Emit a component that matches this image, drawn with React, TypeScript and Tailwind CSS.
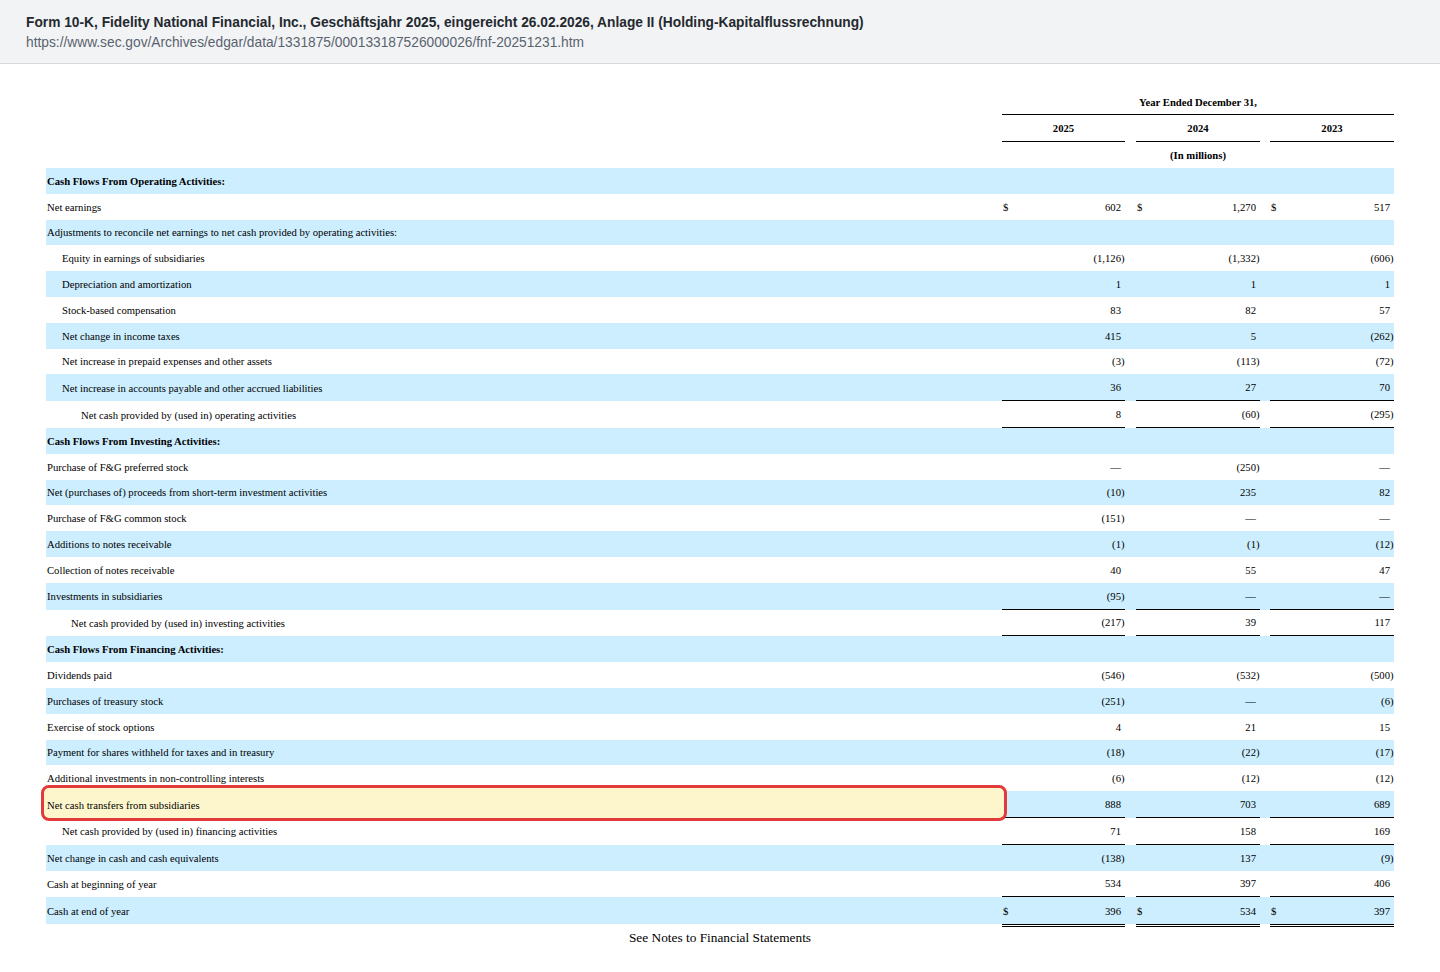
import React from "react";

type Row = {
  label: string;
  pl?: string;
  bold?: boolean;
  vals?: string[];
  dollar?: boolean;
  border?: "single" | "double";
  highlight?: boolean;
};

const rows: Row[] = [
  { label: "Cash Flows From Operating Activities:", bold: true },
  { label: "Net earnings", vals: ["602", "1,270", "517"], dollar: true },
  { label: "Adjustments to reconcile net earnings to net cash provided by operating activities:" },
  { label: "Equity in earnings of subsidiaries", pl: "pl-[16px]", vals: ["(1,126)", "(1,332)", "(606)"] },
  { label: "Depreciation and amortization", pl: "pl-[16px]", vals: ["1", "1", "1"] },
  { label: "Stock-based compensation", pl: "pl-[16px]", vals: ["83", "82", "57"] },
  { label: "Net change in income taxes", pl: "pl-[16px]", vals: ["415", "5", "(262)"] },
  { label: "Net increase in prepaid expenses and other assets", pl: "pl-[16px]", vals: ["(3)", "(113)", "(72)"] },
  { label: "Net increase in accounts payable and other accrued liabilities", pl: "pl-[16px]", vals: ["36", "27", "70"], border: "single" },
  { label: "Net cash provided by (used in) operating activities", pl: "pl-[35px]", vals: ["8", "(60)", "(295)"], border: "single" },
  { label: "Cash Flows From Investing Activities:", bold: true },
  { label: "Purchase of F&G preferred stock", vals: ["—", "(250)", "—"] },
  { label: "Net (purchases of) proceeds from short-term investment activities", vals: ["(10)", "235", "82"] },
  { label: "Purchase of F&G common stock", vals: ["(151)", "—", "—"] },
  { label: "Additions to notes receivable", vals: ["(1)", "(1)", "(12)"] },
  { label: "Collection of notes receivable", vals: ["40", "55", "47"] },
  { label: "Investments in subsidiaries", vals: ["(95)", "—", "—"], border: "single" },
  { label: "Net cash provided by (used in) investing activities", pl: "pl-[25px]", vals: ["(217)", "39", "117"], border: "single" },
  { label: "Cash Flows From Financing Activities:", bold: true },
  { label: "Dividends paid", vals: ["(546)", "(532)", "(500)"] },
  { label: "Purchases of treasury stock", vals: ["(251)", "—", "(6)"] },
  { label: "Exercise of stock options", vals: ["4", "21", "15"] },
  { label: "Payment for shares withheld for taxes and in treasury", vals: ["(18)", "(22)", "(17)"] },
  { label: "Additional investments in non-controlling interests", vals: ["(6)", "(12)", "(12)"] },
  { label: "Net cash transfers from subsidiaries", vals: ["888", "703", "689"], border: "single", highlight: true },
  { label: "Net cash provided by (used in) financing activities", pl: "pl-[16px]", vals: ["71", "158", "169"], border: "single" },
  { label: "Net change in cash and cash equivalents", vals: ["(138)", "137", "(9)"] },
  { label: "Cash at beginning of year", vals: ["534", "397", "406"], border: "single" },
  { label: "Cash at end of year", vals: ["396", "534", "397"], dollar: true, border: "double" },
];

const widths = ["w-[123px]", "w-[124px]", "w-[124px]"];

function ValCell({ v, dollar, border, w }: { v?: string; dollar?: boolean; border: boolean; w: string }) {
  const paren = !!v && v.startsWith("(");
  const num = paren && v ? v.slice(0, -1) : v;
  return (
    <div className={`${w} flex h-full items-center ${border ? "border-b border-black" : ""}`}>
      <span className="w-[10px] pl-[1px]">{dollar ? "$" : ""}</span>
      <span className="flex-1 text-right">{num ?? ""}</span>
      <span className="w-[4px]">{paren ? ")" : ""}</span>
    </div>
  );
}

function TableRow({ row, idx }: { row: Row; idx: number }) {
  const blue = idx % 2 === 0;
  const bg = blue ? "bg-[#cceeff]" : "";
  const single = row.border === "single";
  const h = single ? "h-[26.8px]" : row.border === "double" ? "h-[27px]" : "h-[25.8px]";
  const label = (
    <div className={`relative flex h-full flex-1 items-center ${row.pl ?? "pl-[1px]"} ${row.bold ? "font-bold" : ""}`}>
      {row.highlight && (
        <div className="absolute -top-[6px] -bottom-[3px] -left-[5px] -right-[5px] rounded-[8px] border-[3px] border-[#e23b3b] bg-[#fdf6cd]" />
      )}
      <span className="relative">{row.label}</span>
    </div>
  );
  const inner = (
    <div className={`flex ${h} ${bg}`}>
      {label}
      <ValCell v={row.vals?.[0]} dollar={row.dollar} border={single} w={widths[0]} />
      <div className="w-[11px]" />
      <ValCell v={row.vals?.[1]} dollar={row.dollar} border={single} w={widths[1]} />
      <div className="w-[10px]" />
      <ValCell v={row.vals?.[2]} dollar={row.dollar} border={single} w={widths[2]} />
    </div>
  );
  if (row.border === "double") {
    return (
      <div className="flex flex-col">
        {inner}
        <div className="flex h-[3px]">
          <div className="flex-1" />
          <div className="w-[123px] border-y border-black" />
          <div className="w-[11px]" />
          <div className="w-[124px] border-y border-black" />
          <div className="w-[10px]" />
          <div className="w-[124px] border-y border-black" />
        </div>
      </div>
    );
  }
  return inner;
}

export default function App() {
  return (
    <div className="min-h-[972px] bg-white">
      <div className="box-border flex h-[64px] flex-col gap-[2px] border-b border-[#d4d9df] bg-[#f2f3f5] px-[26px] pt-[14px] font-['Liberation_Sans',Arial,sans-serif]">
        <div className="text-[13.75px] leading-[18px] font-bold text-[#24292f]">
          Form 10-K, Fidelity National Financial, Inc., Geschäftsjahr 2025, eingereicht 26.02.2026, Anlage II (Holding-Kapitalflussrechnung)
        </div>
        <div className="text-[13.75px] leading-[18px] text-[#59636e]">
          https://www.sec.gov/Archives/edgar/data/1331875/000133187526000026/fnf-20251231.htm
        </div>
      </div>

      <div className="px-[46px] pt-[25px] font-['Liberation_Serif','Times_New_Roman',serif] text-[10.67px] leading-[12px] text-black">
        <div className="flex h-[26px]">
          <div className="flex-1" />
          <div className="flex w-[392px] items-center justify-center border-b border-black font-bold">
            Year Ended December 31,
          </div>
        </div>
        <div className="flex h-[27px]">
          <div className="flex-1" />
          <div className="flex w-[123px] items-center justify-center border-b border-black font-bold">2025</div>
          <div className="w-[11px]" />
          <div className="flex w-[124px] items-center justify-center border-b border-black font-bold">2024</div>
          <div className="w-[10px]" />
          <div className="flex w-[124px] items-center justify-center border-b border-black font-bold">2023</div>
        </div>
        <div className="flex h-[26px]">
          <div className="flex-1" />
          <div className="flex w-[392px] items-center justify-center font-bold">(In millions)</div>
        </div>

        {rows.map((r, i) => (
          <TableRow key={i} row={r} idx={i} />
        ))}

        <div className="mt-[3px] text-center text-[13.33px] leading-[15px]">See Notes to Financial Statements</div>
      </div>
    </div>
  );
}
